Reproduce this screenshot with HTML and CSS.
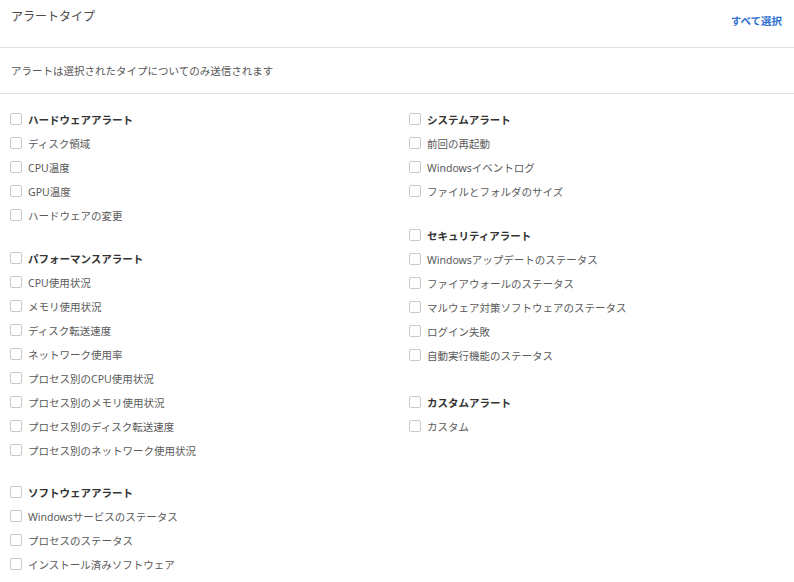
FILE: index.html
```html
<!DOCTYPE html>
<html lang="ja">
<head>
<meta charset="utf-8">
<link rel="stylesheet" href="styles.css">
</head>
<body>
<div class="panel">
  <div class="header">
    <div class="title">アラートタイプ</div>
    <a class="select-all">すべて選択</a>
  </div>
  <div class="desc">アラートは選択されたタイプについてのみ送信されます</div>
  <div class="columns">
    <div class="col">
      <div class="group g-hw">
        <div class="row head"><span class="cb"></span>ハードウェアアラート</div>
        <div class="row"><span class="cb"></span>ディスク領域</div>
        <div class="row"><span class="cb"></span>CPU温度</div>
        <div class="row"><span class="cb"></span>GPU温度</div>
        <div class="row"><span class="cb"></span>ハードウェアの変更</div>
      </div>
      <div class="group g-perf">
        <div class="row head"><span class="cb"></span>パフォーマンスアラート</div>
        <div class="row"><span class="cb"></span>CPU使用状況</div>
        <div class="row"><span class="cb"></span>メモリ使用状況</div>
        <div class="row"><span class="cb"></span>ディスク転送速度</div>
        <div class="row"><span class="cb"></span>ネットワーク使用率</div>
        <div class="row"><span class="cb"></span>プロセス別のCPU使用状況</div>
        <div class="row"><span class="cb"></span>プロセス別のメモリ使用状況</div>
        <div class="row"><span class="cb"></span>プロセス別のディスク転送速度</div>
        <div class="row"><span class="cb"></span>プロセス別のネットワーク使用状況</div>
      </div>
      <div class="group">
        <div class="row head"><span class="cb"></span>ソフトウェアアラート</div>
        <div class="row"><span class="cb"></span>Windowsサービスのステータス</div>
        <div class="row"><span class="cb"></span>プロセスのステータス</div>
        <div class="row"><span class="cb"></span>インストール済みソフトウェア</div>
      </div>
    </div>
    <div class="col">
      <div class="group g-sys">
        <div class="row head"><span class="cb"></span>システムアラート</div>
        <div class="row"><span class="cb"></span>前回の再起動</div>
        <div class="row"><span class="cb"></span>Windowsイベントログ</div>
        <div class="row"><span class="cb"></span>ファイルとフォルダのサイズ</div>
      </div>
      <div class="group g-sec">
        <div class="row head"><span class="cb"></span>セキュリティアラート</div>
        <div class="row"><span class="cb"></span>Windowsアップデートのステータス</div>
        <div class="row"><span class="cb"></span>ファイアウォールのステータス</div>
        <div class="row"><span class="cb"></span>マルウェア対策ソフトウェアのステータス</div>
        <div class="row"><span class="cb"></span>ログイン失敗</div>
        <div class="row"><span class="cb"></span>自動実行機能のステータス</div>
      </div>
      <div class="group">
        <div class="row head"><span class="cb"></span>カスタムアラート</div>
        <div class="row"><span class="cb"></span>カスタム</div>
      </div>
    </div>
  </div>
</div>
</body>
</html>
```
FILE: styles.css
```css
html, body {
  margin: 0;
  padding: 0;
  background: #fff;
}
body {
  font-family: "Noto Sans", "Noto Sans CJK JP", sans-serif;
  color: #5a5a5a;
  font-size: 10.5px;
}
.panel {
  width: 794px;
}
.header {
  height: 48px;
  box-sizing: border-box;
  border-bottom: 1px solid #e2e2e2;
  display: flex;
  justify-content: space-between;
  align-items: flex-start;
  padding: 0 12px 0 11px;
}
.title {
  font-size: 12px;
  line-height: 16px;
  margin-top: 9px;
  color: #4a4a4a;
}
.select-all {
  font-size: 10.5px;
  line-height: 16px;
  margin-top: 13px;
  color: #2f6fd0;
  font-weight: 700;
  cursor: pointer;
}
.desc {
  height: 46px;
  box-sizing: border-box;
  border-bottom: 1px solid #e2e2e2;
  display: flex;
  align-items: center;
  padding: 0 11px;
  color: #555;
}
.columns {
  display: grid;
  grid-template-columns: 399px 1fr;
  padding: 13px 0 0 10px;
}
.group {
  margin-bottom: 20px;
}
.group.g-hw {
  margin-bottom: 19px;
}
.group.g-perf {
  margin-bottom: 18px;
}
.group.g-sys {
  margin-bottom: 20px;
}
.group.g-sec {
  margin-bottom: 23px;
}
.row {
  height: 24px;
  display: flex;
  align-items: center;
  white-space: nowrap;
}
.row.head {
  font-weight: 700;
  color: #333;
}
.cb {
  width: 12px;
  height: 12px;
  box-sizing: border-box;
  border: 1px solid #c9c9c9;
  border-radius: 2px;
  margin-right: 6px;
  flex: none;
  background: #fff;
}
```
